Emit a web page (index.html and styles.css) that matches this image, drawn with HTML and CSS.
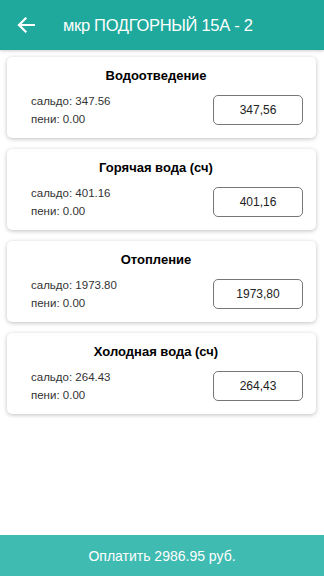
FILE: index.html
```html
<!DOCTYPE html>
<html>

<head>
    <title>мкр ПОДГОРНЫЙ 15А - 2</title>
    <link rel="stylesheet" href="styles.css">
</head>

<body>
    <div class="header">
        <span class="back">
            <svg width="18" height="16" viewBox="0 0 18 16">
                <path d="M17 8H2M8.5 1.5L2 8l6.5 6.5" fill="none" stroke="#fff" stroke-width="2.2" stroke-linecap="square"/>
            </svg>
        </span>
        <h1>мкр ПОДГОРНЫЙ 15А - 2</h1>
    </div>

    <div class="list">
        <div class="card">
            <h3>Водоотведение</h3>
            <div class="row">
                <div class="info">
                    <div>сальдо: 347.56</div>
                    <div>пени: 0.00</div>
                </div>
                <div class="sum">347,56</div>
            </div>
        </div>
        <div class="card">
            <h3>Горячая вода (сч)</h3>
            <div class="row">
                <div class="info">
                    <div>сальдо: 401.16</div>
                    <div>пени: 0.00</div>
                </div>
                <div class="sum">401,16</div>
            </div>
        </div>
        <div class="card">
            <h3>Отопление</h3>
            <div class="row">
                <div class="info">
                    <div>сальдо: 1973.80</div>
                    <div>пени: 0.00</div>
                </div>
                <div class="sum">1973,80</div>
            </div>
        </div>
        <div class="card">
            <h3>Холодная вода (сч)</h3>
            <div class="row">
                <div class="info">
                    <div>сальдо: 264.43</div>
                    <div>пени: 0.00</div>
                </div>
                <div class="sum">264,43</div>
            </div>
        </div>
    </div>

    <div class="pay">Оплатить 2986.95 руб.</div>
</body>

</html>
```

FILE: styles.css
```css
body {
    margin: 0;
    font-family: "Liberation Sans", Arial, sans-serif;
    background: #fff;
    height: 576px;
    position: relative;
    overflow: hidden;
}
.header {
    height: 50px;
    background-color: #1ea99c;
    display: flex;
    align-items: center;
    color: white;
    box-shadow: 0 1px 3px rgba(0, 0, 0, 0.2);
}
.back {
    display: flex;
    width: 18px;
    margin-left: 17px;
    margin-right: 28px;
}
h1 {
    margin: 0;
    font-size: 16.5px;
    font-weight: normal;
    letter-spacing: -0.3px;
}
.list {
    padding: 7px 8px 0 7px;
    display: flex;
    flex-direction: column;
    gap: 11px;
}
.card {
    height: 81px;
    box-sizing: border-box;
    background: white;
    border-radius: 5px;
    box-shadow: 0 1px 4px rgba(0, 0, 0, 0.25);
    padding: 11px 13px 0 24px;
}
h3 {
    margin: 0 0 9px -22px;
    font-size: 13px;
    text-align: center;
}
.row {
    display: flex;
    justify-content: space-between;
    align-items: center;
}
.info {
    font-size: 11.5px;
    color: #333;
    line-height: 18px;
}
.sum {
    width: 88px;
    height: 28px;
    border: 1px solid #777;
    border-radius: 5px;
    display: flex;
    align-items: center;
    justify-content: center;
    font-size: 12px;
    color: #222;
}
.pay {
    position: absolute;
    left: 0;
    right: 0;
    bottom: 0;
    height: 41px;
    background-color: #40bbb1;
    color: white;
    font-size: 14px;
    display: flex;
    align-items: center;
    justify-content: center;
}
```
